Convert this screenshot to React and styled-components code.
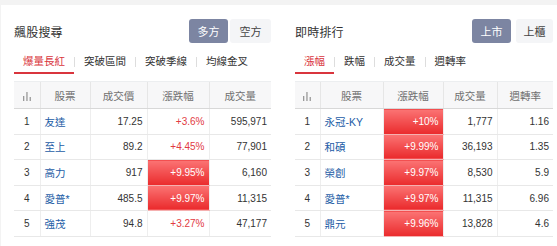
import React from "react";
import styled, { createGlobalStyle } from "styled-components";

const GlobalStyle = createGlobalStyle`
  body {
    margin: 0;
    background: #f3f3f3;
    font-family: "Liberation Sans", "Noto Sans CJK TC", sans-serif;
    color: #333;
  }
`;

const Page = styled.div`
  padding: 5px 0 0 1px;
`;

const Board = styled.div`
  display: flex;
  gap: 24px;
  background: #fff;
  padding: 0 5px 10px 13px;
  height: 241px;
  box-sizing: border-box;
`;

const Panel = styled.div`
  width: ${(p) => p.width}px;
  flex: none;
`;

const PanelHead = styled.div`
  display: flex;
  justify-content: space-between;
  align-items: center;
  margin-top: 14px;
  height: 24px;
`;

const Title = styled.h2`
  margin: 0;
  font-size: 12px;
  font-weight: normal;
  letter-spacing: 0.2px;
  color: #333;
`;

const Toggle = styled.div`
  display: flex;
  gap: ${(p) => p.gap}px;
`;

const ToggleButton = styled.button`
  width: ${(p) => p.w}px;
  height: 24px;
  border: none;
  border-radius: 3px;
  padding: 0;
  font-family: inherit;
  font-size: 11px;
  background: ${(p) => (p.active ? "#7c85a2" : "#f4f5f7")};
  color: ${(p) => (p.active ? "#fff" : "#444")};
`;

const TabBar = styled.div`
  display: flex;
  align-items: center;
  margin-top: 9px;
`;

const Tab = styled.div`
  height: 20px;
  line-height: 18px;
  padding: 0 ${(p) => p.pad}px;
  font-size: 10.5px;
  color: ${(p) => (p.active ? "#d9353d" : "#333")};
  border-bottom: 2px solid ${(p) => (p.active ? "#d9353d" : "transparent")};
`;

const TabSep = styled.span`
  width: 1px;
  height: 10px;
  background: #ddd;
  margin-bottom: 2px;
`;

const Table = styled.table`
  width: 100%;
  margin-top: 7px;
  border-collapse: collapse;
  table-layout: fixed;
  font-size: 10px;
`;

const Th = styled.th`
  height: 26px;
  background: #f7f7f8;
  border-top: 1px solid #eceef0;
  border-bottom: 1px solid #d8d8d8;
  border-left: 1px solid #e6e6e6;
  font-weight: normal;
  font-size: 10.5px;
  color: #707070;
  text-align: center;
  padding: 0;
  &:first-child {
    border-left: none;
  }
`;

const Tr = styled.tr`
  height: 25.6px;
`;

const Td = styled.td`
  border-bottom: 1px solid #e8e8e8;
  border-left: 1px solid #eeeeee;
  padding: ${(p) =>
    p.align === "left" ? "0 0 0 4px" : p.align === "center" ? "0" : "0 4px 0 0"};
  text-align: ${(p) => p.align || "right"};
  color: #333;
  white-space: nowrap;
  &:first-child {
    border-left: none;
  }
`;

const NameLink = styled.a`
  color: #1c5ca6;
  text-decoration: none;
  font-size: 10.5px;
`;

const ChangeCell = styled(Td)`
  color: ${(p) => (p.hot ? "#fff" : "#e23a42")};
  background: ${(p) =>
    p.hot ? "linear-gradient(#fb7474, #ea2a2c)" : "transparent"};
  border-bottom-color: ${(p) => (p.hot ? "#f5b0b0" : "#e8e8e8")};
`;

const BarIcon = () => (
  <svg width="8" height="9" viewBox="0 0 8 9" style={{ verticalAlign: "middle" }}>
    <rect x="0" y="4" width="1.3" height="5" fill="#999" />
    <rect x="3.3" y="0" width="1.3" height="9" fill="#999" />
    <rect x="6.6" y="5" width="1.3" height="4" fill="#999" />
  </svg>
);

const searchRows = [
  { name: "友達", price: "17.25", change: "+3.6%", vol: "595,971", hot: false },
  { name: "至上", price: "89.2", change: "+4.45%", vol: "77,901", hot: false },
  { name: "高力", price: "917", change: "+9.95%", vol: "6,160", hot: true },
  { name: "愛普*", price: "485.5", change: "+9.97%", vol: "11,315", hot: true },
  { name: "強茂", price: "94.8", change: "+3.27%", vol: "47,177", hot: false },
];

const rankRows = [
  { name: "永冠-KY", change: "+10%", vol: "1,777", turn: "1.16" },
  { name: "和碩", change: "+9.99%", vol: "36,193", turn: "1.35" },
  { name: "榮創", change: "+9.97%", vol: "8,530", turn: "5.9" },
  { name: "愛普*", change: "+9.97%", vol: "11,315", turn: "6.96" },
  { name: "鼎元", change: "+9.96%", vol: "13,828", turn: "4.6" },
];

const Tabs = ({ items, pad }) => (
  <TabBar>
    {items.map((t, i) => (
      <React.Fragment key={t}>
        {i > 0 && <TabSep />}
        <Tab active={i === 0} pad={pad}>
          {t}
        </Tab>
      </React.Fragment>
    ))}
  </TabBar>
);

const App = () => {
  return (
    <Page>
      <GlobalStyle />
      <Board>
        <Panel width={257}>
          <PanelHead>
            <Title>飆股搜尋</Title>
            <Toggle gap={2}>
              <ToggleButton active w={39}>多方</ToggleButton>
              <ToggleButton w={41}>空方</ToggleButton>
            </Toggle>
          </PanelHead>
          <Tabs items={["爆量長紅", "突破區間", "突破季線", "均線金叉"]} pad={9} />
          <Table>
            <colgroup>
              <col style={{ width: 26 }} />
              <col style={{ width: 50 }} />
              <col style={{ width: 57 }} />
              <col style={{ width: 62 }} />
              <col style={{ width: 62 }} />
            </colgroup>
            <thead>
              <tr>
                <Th><BarIcon /></Th>
                <Th>股票</Th>
                <Th>成交價</Th>
                <Th>漲跌幅</Th>
                <Th>成交量</Th>
              </tr>
            </thead>
            <tbody>
              {searchRows.map((r, i) => (
                <Tr key={r.name}>
                  <Td align="center">{i + 1}</Td>
                  <Td align="left"><NameLink>{r.name}</NameLink></Td>
                  <Td>{r.price}</Td>
                  <ChangeCell hot={r.hot}>{r.change}</ChangeCell>
                  <Td>{r.vol}</Td>
                </Tr>
              ))}
            </tbody>
          </Table>
        </Panel>
        <Panel width={258}>
          <PanelHead>
            <Title>即時排行</Title>
            <Toggle gap={5}>
              <ToggleButton active w={39}>上市</ToggleButton>
              <ToggleButton w={37}>上櫃</ToggleButton>
            </Toggle>
          </PanelHead>
          <Tabs items={["漲幅", "跌幅", "成交量", "週轉率"]} pad={9} />
          <Table>
            <colgroup>
              <col style={{ width: 25 }} />
              <col style={{ width: 63 }} />
              <col style={{ width: 60 }} />
              <col style={{ width: 54 }} />
              <col style={{ width: 56 }} />
            </colgroup>
            <thead>
              <tr>
                <Th><BarIcon /></Th>
                <Th>股票</Th>
                <Th>漲跌幅</Th>
                <Th>成交量</Th>
                <Th>週轉率</Th>
              </tr>
            </thead>
            <tbody>
              {rankRows.map((r, i) => (
                <Tr key={r.name + i}>
                  <Td align="center">{i + 1}</Td>
                  <Td align="left"><NameLink>{r.name}</NameLink></Td>
                  <ChangeCell hot>{r.change}</ChangeCell>
                  <Td>{r.vol}</Td>
                  <Td>{r.turn}</Td>
                </Tr>
              ))}
            </tbody>
          </Table>
        </Panel>
      </Board>
    </Page>
  );
};

export default App;
